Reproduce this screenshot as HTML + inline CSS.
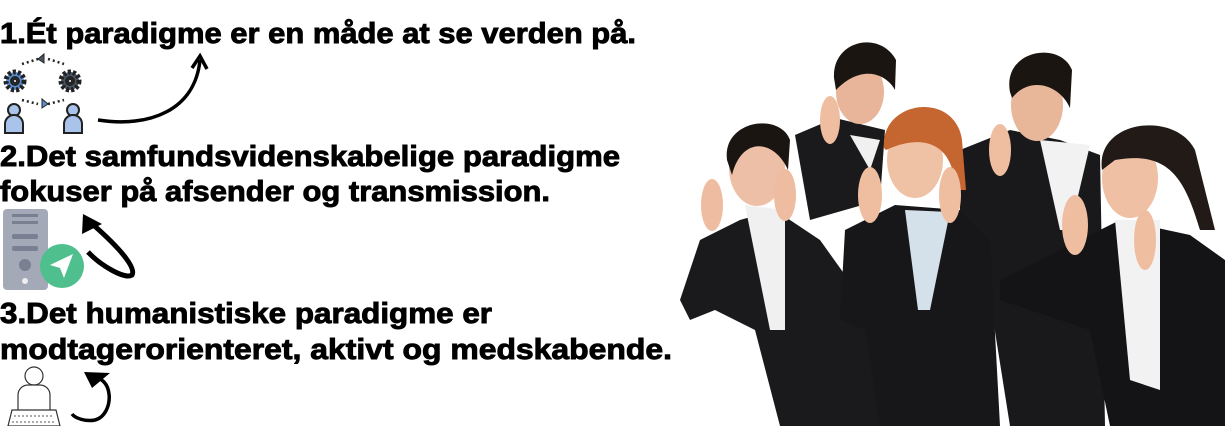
<!DOCTYPE html>
<html><head><meta charset="utf-8"><style>
html,body{margin:0;padding:0;background:#fff;width:1225px;height:426px;overflow:hidden}
svg{display:block}
text{font-family:"Liberation Sans",sans-serif;font-weight:bold;fill:#000;stroke:#000;stroke-width:0.9}
</style></head><body>
<svg width="1225" height="426" viewBox="0 0 1225 426">
<text x="0" y="43" font-size="29" textLength="636" lengthAdjust="spacingAndGlyphs">1.Ét paradigme er en måde at se verden på.</text>
<text x="0" y="166" font-size="29" textLength="620" lengthAdjust="spacingAndGlyphs">2.Det samfundsvidenskabelige paradigme</text>
<text x="0" y="201" font-size="29" textLength="550" lengthAdjust="spacingAndGlyphs">fokuser på afsender og transmission.</text>
<text x="0" y="323" font-size="29" textLength="492" lengthAdjust="spacingAndGlyphs">3.Det humanistiske paradigme er</text>
<text x="0" y="359" font-size="29" textLength="672" lengthAdjust="spacingAndGlyphs">modtagerorienteret, aktivt og medskabende.</text>

<!-- icon 1 -->
<g stroke="#222" stroke-width="2">
<circle cx="15" cy="81" r="9" fill="#5b8fd0" stroke-dasharray="3 2" stroke-width="5"/>
<circle cx="15" cy="81" r="4" fill="#5b8fd0"/><circle cx="15" cy="81" r="2" fill="#fff"/>
<circle cx="70" cy="81" r="9" fill="#4a5564" stroke-dasharray="3 2" stroke-width="5"/>
<circle cx="70" cy="81" r="4" fill="#4a5564"/><circle cx="70" cy="81" r="2" fill="#fff"/>
<circle cx="14" cy="110" r="6" fill="#a9c3ea"/><path d="M5 133v-9a9 9 0 0 1 18 0v9z" fill="#a9c3ea"/>
<circle cx="73" cy="110" r="6" fill="#a9c3ea"/><path d="M64 133v-9a9 9 0 0 1 18 0v9z" fill="#a9c3ea"/>
</g>
<path d="M22 64 L38 59 M48 59 L64 64 M22 100 L38 104 M48 104 L64 100" stroke="#222" stroke-width="2.5" stroke-dasharray="2 3"/>
<path d="M38 59 l6 -5 v9z" fill="#4a5564" stroke="#222"/>
<path d="M48 104 l-6 -5 v9z" fill="#5b8fd0" stroke="#222"/>
<path d="M98 120 C150 128 195 110 200 60" stroke="#000" stroke-width="3.5" fill="none"/>
<path d="M192 68 L200 56 L207 69" stroke="#000" stroke-width="3.5" fill="none"/>

<!-- icon 2 -->
<rect x="3" y="209" width="45" height="81" rx="4" fill="#a3a9b7"/>
<rect x="12" y="214" width="26" height="3" fill="#788092"/><rect x="12" y="221" width="26" height="3" fill="#788092"/>
<rect x="12" y="234" width="26" height="5" rx="2" fill="#788092"/><rect x="12" y="246" width="26" height="5" rx="2" fill="#788092"/>
<circle cx="25" cy="265" r="6" fill="#788092"/><circle cx="25" cy="281" r="3" fill="#eee"/>
<circle cx="62" cy="266" r="22" fill="#4fc08d"/>
<path d="M50 265 L73 254 L64 278 L60 268z" fill="#fff"/>
<path d="M88 252 C100 265 125 280 132 275 C138 265 105 235 90 222" stroke="#000" stroke-width="5" fill="none"/>
<path d="M82 234 L83 214 L102 224z" fill="#000"/>

<!-- icon 3 -->
<circle cx="34" cy="376" r="9" fill="#fff" stroke="#333" stroke-width="1.2"/>
<path d="M18 410 v-15 a10 10 0 0 1 10 -10 h12 a10 10 0 0 1 10 10 v15" fill="#fff" stroke="#333" stroke-width="1.2"/>
<path d="M12 410 h44 l4 16 h-52z" fill="#fff" stroke="#333" stroke-width="1.2"/>
<path d="M14 416 h40 M12 422 h44" stroke="#555" stroke-dasharray="2 2"/>
<path d="M88 378 C115 372 115 415 95 420 C85 422 75 418 72 414" stroke="#000" stroke-width="3.5" fill="none"/>
<path d="M84 372 L110 373 L92 388z" fill="#000"/>

<!-- photo approximation -->
<g>
<path d="M795 135 L835 118 L885 130 L880 200 L810 220z" fill="#1a1a1c"/>
<path d="M850 135 L880 140 L870 170z" fill="#f0f0f0"/>
<ellipse cx="860" cy="92" rx="24" ry="32" fill="#e9b59a"/>
<path d="M834 78 C832 40 880 30 896 60 L895 90 C885 72 860 65 836 90z" fill="#1b1512"/>
<!-- man 2 -->
<path d="M960 150 L1010 130 L1060 140 L1100 155 L1105 426 L1010 426 L990 300 L960 250z" fill="#19191b"/>
<path d="M1040 140 L1090 145 L1070 230 L1060 230z" fill="#f2f2f2"/>
<ellipse cx="1037" cy="105" rx="26" ry="36" fill="#e8b699"/>
<path d="M1010 92 C1002 50 1060 40 1072 70 L1070 108 C1060 85 1030 75 1012 98z" fill="#1b1512"/>
<!-- left woman -->
<path d="M700 240 L740 220 L775 210 L820 240 L870 310 L885 426 L780 426 L755 330 L715 310 L690 320 L680 300z" fill="#1a1a1c"/>
<path d="M745 205 L785 210 L785 330 L770 330z" fill="#f0f0f0"/>
<ellipse cx="757" cy="168" rx="28" ry="38" fill="#edbfa6"/>
<path d="M727 160 C722 120 780 112 790 140 L788 170 C775 140 742 135 732 175z" fill="#1b1512"/>
<ellipse cx="712" cy="205" rx="11" ry="26" fill="#eebca0"/>
<ellipse cx="785" cy="195" rx="11" ry="26" fill="#eebca0"/>
<!-- middle woman -->
<path d="M845 230 L895 205 L960 210 L990 240 L1000 426 L880 426 L865 330 L840 320z" fill="#17171a"/>
<path d="M905 210 L950 212 L930 310 L918 310z" fill="#d5e1ea"/>
<ellipse cx="915" cy="160" rx="28" ry="38" fill="#f0c2a5"/>
<path d="M884 148 C880 100 955 90 962 140 L966 190 L955 190 C955 150 930 130 886 150z" fill="#c5652f"/>
<ellipse cx="870" cy="195" rx="12" ry="28" fill="#efbea1"/>
<ellipse cx="950" cy="195" rx="11" ry="28" fill="#efbea1"/>
<!-- right woman -->
<path d="M1000 280 L1060 250 L1120 220 L1190 235 L1225 260 L1225 426 L1110 426 L1090 330 L1000 300z" fill="#141416"/>
<path d="M1115 220 L1160 220 L1160 390 L1130 380z" fill="#f2f2f2"/>
<ellipse cx="1130" cy="178" rx="28" ry="40" fill="#f0c0a4"/>
<path d="M1102 170 C1095 120 1175 110 1195 150 L1215 230 L1200 230 C1185 180 1170 150 1115 160z" fill="#211a17"/>
<ellipse cx="1075" cy="225" rx="13" ry="30" fill="#efbea1"/>
<ellipse cx="1145" cy="240" rx="11" ry="30" fill="#efbea1"/>
<ellipse cx="1000" cy="150" rx="11" ry="26" fill="#efbea1"/>
<ellipse cx="830" cy="120" rx="10" ry="24" fill="#efbea1"/>
</g>
</svg>
</body></html>
